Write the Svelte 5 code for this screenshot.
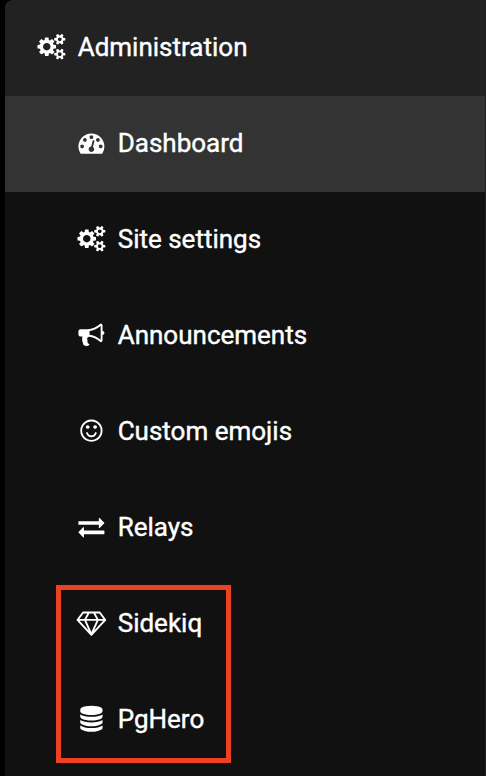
<script>
  const dot = (x, y) =>
    `M${x} ${y}q0 53 -37.5 90.5t-90.5 37.5t-90.5 -37.5t-37.5 -90.5t37.5 -90.5t90.5 -37.5t90.5 37.5t37.5 90.5z`;
  const smallGear = (y) =>
    `M1920 ${y}v-140q0 -16 -149 -31q-12 -27 -30 -52q51 -113 51 -138q0 -4 -4 -7q-122 -71 -124 -71q-8 0 -46 47t-52 68q-20 -2 -30 -2t-30 2q-14 -21 -52 -68t-46 -47q-2 0 -124 71q-4 3 -4 7q0 25 51 138q-18 25 -30 52q-149 15 -149 31v140q0 16 149 31q13 29 30 52q-51 113 -51 138q0 4 4 7q4 2 35 20t59 34t30 16q8 0 46 -46.5t52 -67.5q20 2 30 2t30 -2q51 71 92 112l6 2q4 0 124 -70q4 -3 4 -7q0 -25 -51 -138q17 -23 30 -52q149 -15 149 -31z`;
  const disc = (y) =>
    `M768 ${y}q237 0 443 43t325 127v-170q0 -69 -103 -128t-280 -93.5t-385 -34.5t-385 34.5t-280 93.5t-103 128v170q119 -84 325 -127t443 -43z`;

  // Glyph outlines on a 1792-unit em, y axis pointing up
  const icons = {
    cogs: {
      width: 1920,
      d: 'M896 640q0 -106 -75 -181t-181 -75t-181 75t-75 181t75 181t181 75t181 -75t75 -181z' +
        dot(1664, 128) + dot(1664, 1152) +
        'M1280 731v-185q0 -10 -7 -19.5t-16 -10.5l-155 -24q-11 -35 -32 -76q34 -48 90 -115q7 -11 7 -20q0 -12 -7 -19q-23 -30 -82.5 -89.5t-78.5 -59.5q-11 0 -21 7l-115 90q-37 -19 -77 -31q-11 -108 -23 -155q-7 -24 -30 -24h-186q-11 0 -20 7.5t-10 17.5l-23 153q-34 10 -75 31l-118 -89q-7 -7 -20 -7q-11 0 -21 8q-144 133 -144 160q0 9 7 19q10 14 41 53t47 61q-23 44 -35 82l-152 24q-10 1 -17 9.5t-7 19.5v185q0 10 7 19.5t16 10.5l155 24q11 35 32 76q-34 48 -90 115q-7 11 -7 20q0 12 7 20q22 30 82 89t79 59q11 0 21 -7l115 -90q34 18 77 32q11 108 23 154q7 24 30 24h186q11 0 20 -7.5t10 -17.5l23 -153q34 -10 75 -31l118 89q8 7 20 7q11 0 21 -8q144 -133 144 -160q0 -8 -7 -19q-12 -16 -42 -54t-45 -60q23 -48 34 -82l152 -23q10 -2 17 -10.5t7 -19.5z' +
        smallGear(198) + smallGear(1222)
    },
    gauge: {
      width: 1792,
      d: dot(384, 384) + dot(576, 832) + dot(1664, 384) + dot(1024, 1024) + dot(1472, 832) +
        'M1004 351l101 382q6 26 -7.5 48.5t-38.5 29.5t-48 -6.5t-30 -39.5l-101 -382q-60 -5 -107 -43.5t-63 -98.5q-20 -77 20 -146t117 -89t146 20t89 117q16 60 -6 117t-72 91z' +
        'M1792 384q0 -261 -141 -483q-19 -29 -54 -29h-1402q-35 0 -54 29q-141 221 -141 483q0 182 71 348t191 286t286 191t348 71t348 -71t286 -191t191 -286t71 -348z'
    },
    bullhorn: {
      width: 1792,
      d: 'M1664 896q53 0 90.5 -37.5t37.5 -90.5t-37.5 -90.5t-90.5 -37.5v-384q0 -52 -38 -90t-90 -38q-417 347 -812 380q-58 -19 -91 -66t-31 -100.5t40 -92.5q-20 -33 -23 -65.5t6 -58t33.5 -55t48 -50t61.5 -50.5q-29 -58 -111.5 -83t-168.5 -11.5t-132 55.5q-7 23 -29.5 87.5t-32 94.5t-23 89t-15 101t3.5 98.5t22 110.5h-122q-66 0 -113 47t-47 113v192q0 66 47 113t113 47h480q435 0 896 384q52 0 90 -38t38 -90v-384zM1536 292v954q-394 -302 -768 -343v-270q377 -42 768 -341z'
    },
    smile: {
      width: 1536,
      d: 'M1134 461q-37 -121 -138 -195t-228 -74t-228 74t-138 195q-8 25 4 48.5t38 31.5q25 8 48.5 -4t31.5 -38q25 -80 92.5 -129.5t151.5 -49.5t151.5 49.5t92.5 129.5q8 26 32 38t49 4t37 -31.5t4 -48.5z' +
        dot(640, 896) + dot(1152, 896) +
        'M1408 640q0 130 -51 248.5t-136.5 204t-204 136.5t-248.5 51t-248.5 -51t-204 -136.5t-136.5 -204t-51 -248.5t51 -248.5t136.5 -204t204 -136.5t248.5 -51t248.5 51t204 136.5t136.5 204t51 248.5zM1536 640q0 -209 -103 -385.5t-279.5 -279.5t-385.5 -103t-385.5 103t-279.5 279.5t-103 385.5t103 385.5t279.5 279.5t385.5 103t385.5 -103t279.5 -279.5t103 -385.5z'
    },
    exchange: {
      width: 1792,
      d: 'M1792 352v-192q0 -13 -9.5 -22.5t-22.5 -9.5h-1376v-192q0 -13 -9.5 -22.5t-22.5 -9.5q-12 0 -24 10l-319 320q-9 9 -9 22q0 14 9 23l320 320q9 9 23 9q13 0 22.5 -9.5t9.5 -22.5v-192h1376q13 0 22.5 -9.5t9.5 -22.5zM1792 896q0 -14 -9 -23l-320 -320q-9 -9 -23 -9q-13 0 -22.5 9.5t-9.5 22.5v192h-1376q-13 0 -22.5 9.5t-9.5 22.5v192q0 13 9.5 22.5t22.5 9.5h1376v192q0 14 9 23t23 9q12 0 24 -10l319 -319q9 -9 9 -23z'
    },
    diamond: {
      width: 2048,
      d: 'M212 768l623 -665l-300 665h-323zM1024 -4l349 772h-698zM538 896l204 384h-262l-288 -384h346zM1213 103l623 665h-323zM683 896h682l-204 384h-274zM1510 896h346l-288 384h-262zM1651 1382l384 -512q14 -18 13 -41.5t-17 -40.5l-960 -1024q-18 -20 -47 -20t-47 20l-960 1024q-16 17 -17 40.5t13 41.5l384 512q18 26 51 26h1152q33 0 51 -26z'
    },
    database: {
      width: 1536,
      d: disc(768) + disc(0) + disc(384) +
        'M768 1536q208 0 385 -34.5t280 -93.5t103 -128v-128q0 -69 -103 -128t-280 -93.5t-385 -34.5t-385 34.5t-280 93.5t-103 128v128q0 69 103 128t280 93.5t385 34.5z'
    }
  };

  const scale = 26 / 1792;
  const items = [
    { label: 'Dashboard', icon: 'gauge', active: true },
    { label: 'Site settings', icon: 'cogs' },
    { label: 'Announcements', icon: 'bullhorn' },
    { label: 'Custom emojis', icon: 'smile' },
    { label: 'Relays', icon: 'exchange' },
    { label: 'Sidekiq', icon: 'diamond' },
    { label: 'PgHero', icon: 'database' }
  ];
</script>

{#snippet glyph(name)}
  <svg class="icon" viewBox="0 0 32 32" aria-hidden="true">
    <path
      fill-rule="evenodd"
      transform="translate({16.4 - (icons[name].width * scale) / 2} 24) scale({scale} {-scale})"
      d={icons[name].d}
    />
  </svg>
{/snippet}

<nav class="sidebar">
  <div class="menu">
    <div class="row heading">{@render glyph('cogs')}<span class="label">Administration</span></div>
    {#each items as item}
      <div class="row item" class:active={item.active}>
        {@render glyph(item.icon)}<span class="label">{item.label}</span>
      </div>
    {/each}
  </div>
  <div class="highlight"></div>
</nav>

<style>
  :global(body) {
    margin: 0;
    background: #000;
  }
  .sidebar {
    position: relative;
    box-sizing: border-box;
    height: 776px;
    padding-left: 5px;
    overflow: hidden;
    background: #000;
    color: #fff;
    font: 400 26px/32px Roboto, sans-serif;
  }
  .menu {
    height: 100%;
    box-sizing: border-box;
    border-right: 1px solid #202020;
    border-radius: 8px 0 0 0;
    background: #111;
    overflow: hidden;
  }
  .row {
    display: flex;
    align-items: center;
    gap: 10.7px;
    box-sizing: border-box;
    height: 96px;
    white-space: nowrap;
  }
  .label {
    padding-bottom: 2px;
    -webkit-text-stroke: 0.4px #fff;
  }
  .heading {
    padding-left: 30px;
    background: #222;
  }
  .item {
    padding-left: 70px;
  }
  .active {
    background: #333;
  }
  .icon {
    flex: none;
    width: 32px;
    height: 32px;
    overflow: visible;
    fill: #fff;
  }
  .highlight {
    position: absolute;
    left: 56px;
    top: 585px;
    box-sizing: border-box;
    width: 175px;
    height: 178px;
    border: 5px solid #ee4023;
  }
</style>
